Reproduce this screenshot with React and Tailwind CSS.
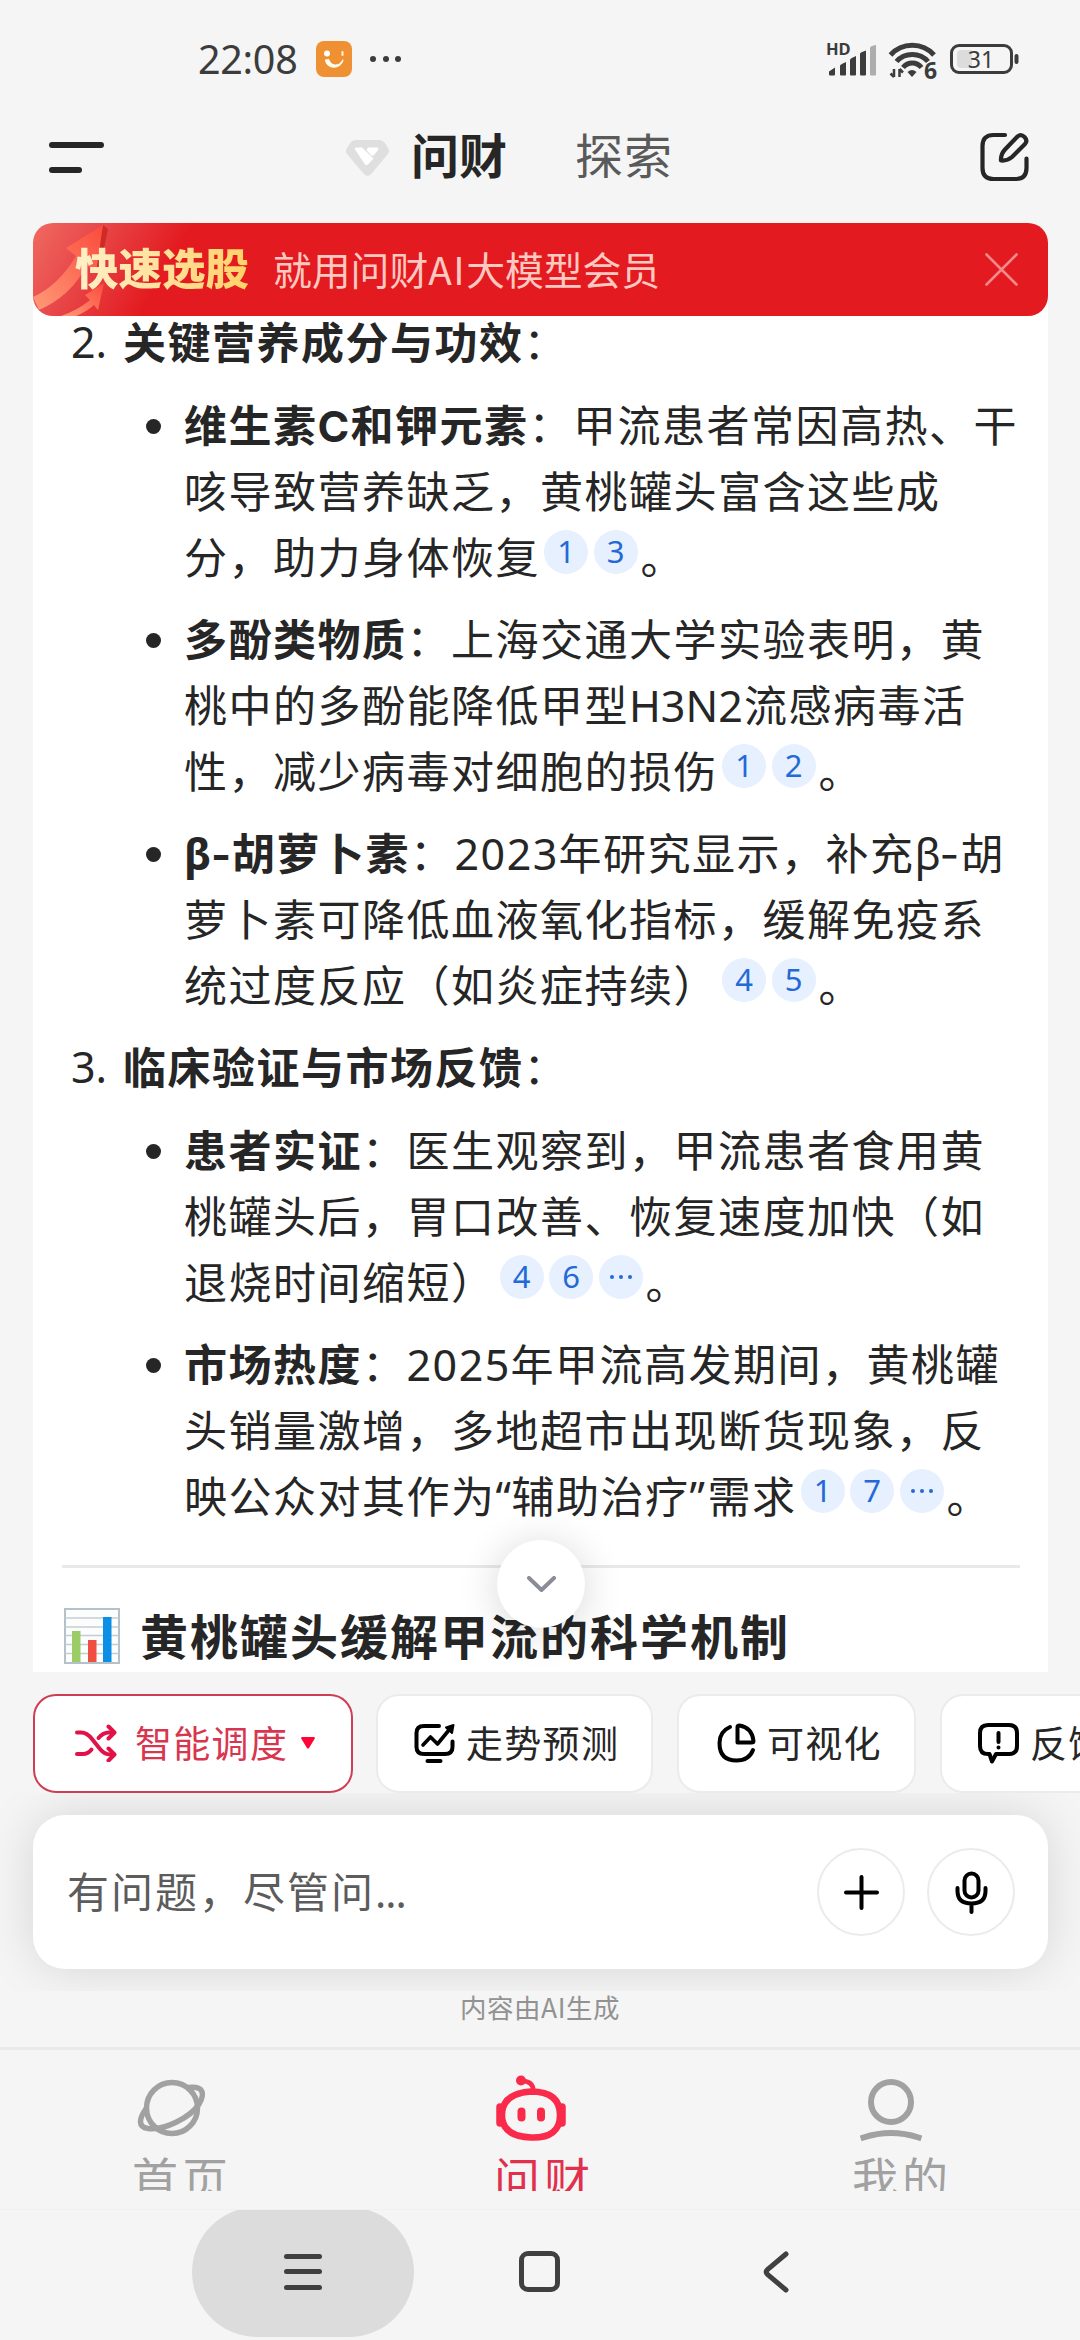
import clsx from "clsx";

const SECTIONS = [
  {
    no: "2.",
    title: "关键营养成分与功效",
    items: [
      {
        lines: [
          [{ b: "维生素" }, { b: "C", w: "w-[33px]", inter: true }, { b: "和钾元素" }, "：甲流患者常因高热、干"],
          ["咳导致营养缺乏，黄桃罐头富含这些成"],
          ["分，助力身体恢复"],
        ],
        refs: ["1", "3"],
      },
      {
        lines: [
          [{ b: "多酚类物质" }, "：上海交通大学实验表明，黄"],
          ["桃中的多酚能降低甲型", { t: "H3N2", w: "w-[115px]" }, "流感病毒活"],
          ["性，减少病毒对细胞的损伤"],
        ],
        refs: ["1", "2"],
      },
      {
        lines: [
          [
            { b: "β", w: "w-[27px]" },
            { b: "-", w: "w-[21px]", inter: true },
            { b: "胡萝卜素" },
            "：",
            { t: "2023", w: "w-[104px] tracking-[1.5px]" },
            "年研究显示，补充",
            { t: "β", w: "w-[25px]" },
            { t: "-", w: "w-[21px]", inter: true },
            "胡",
          ],
          ["萝卜素可降低血液氧化指标，缓解免疫系"],
          ["统过度反应（如炎症持续）"],
        ],
        refs: ["4", "5"],
      },
    ],
  },
  {
    no: "3.",
    title: "临床验证与市场反馈",
    items: [
      {
        lines: [
          [{ b: "患者实证" }, "：医生观察到，甲流患者食用黄"],
          ["桃罐头后，胃口改善、恢复速度加快（如"],
          ["退烧时间缩短）"],
        ],
        refs: ["4", "6", "···"],
      },
      {
        lines: [
          [{ b: "市场热度" }, "：", { t: "2025", w: "w-[104px] tracking-[1.5px]" }, "年甲流高发期间，黄桃罐"],
          ["头销量激增，多地超市出现断货现象，反"],
          ["映公众对其作为", { t: "“", w: "w-[16px]" }, "辅助治疗", { t: "”", w: "w-[18px]" }, "需求"],
        ],
        refs: ["1", "7", "···"],
      },
    ],
  },
];

function Run({ part }) {
  if (typeof part === "string") return part;
  return (
    <span
      className={clsx(
        part.b && "font-bold",
        part.w && "inline-block leading-none",
        part.w && !part.w.includes("tracking") && "tracking-normal",
        part.w && (part.inter ? "font-['Inter',sans-serif]" : "font-['Noto_Sans','Noto_Sans_CJK_SC',sans-serif]"),
        part.w
      )}
    >
      {part.b || part.t}
    </span>
  );
}

function Refs({ list }) {
  return (
    <>
      <span className="ml-[4px] mr-[3px] inline-flex gap-[5.5px] align-[11px]">
        {list.map((r) => (
          <span
            key={r}
            className="flex size-[44px] items-center justify-center rounded-full bg-[#e6f0ff] font-['Noto_Sans',sans-serif] text-[31px] leading-none tracking-normal text-[#2469d6]"
          >
            {r === "···" ? (
              <span className="flex gap-[5px]">
                <i className="size-[4px] rounded-full bg-[#2469d6]" />
                <i className="size-[4px] rounded-full bg-[#2469d6]" />
                <i className="size-[4px] rounded-full bg-[#2469d6]" />
              </span>
            ) : (
              r
            )}
          </span>
        ))}
      </span>
      。
    </>
  );
}

function Section({ section }) {
  return (
    <section>
      <h3 className="mb-[17px] flex h-[66px] pl-[38px]">
        <span className="w-[52px] pt-[2px] font-['Noto_Sans',sans-serif] tracking-normal">{section.no}</span>
        <b className="font-bold">{section.title}</b>：
      </h3>
      <ul>
        {section.items.map((item, i) => (
          <li key={i} className="mb-[16px] flex pl-[113px]">
            <span className="mr-[23px] mt-[29px] size-[15px] shrink-0 rounded-full bg-[#262626]" />
            <div>
              {item.lines.map((line, n) => (
                <div key={n} className="h-[66px] whitespace-nowrap">
                  {line.map((part, k) => (
                    <Run key={k} part={part} />
                  ))}
                  {n === item.lines.length - 1 && <Refs list={item.refs} />}
                </div>
              ))}
            </div>
          </li>
        ))}
      </ul>
    </section>
  );
}

function StatusBar() {
  return (
    <div className="flex h-[118px] items-center pl-[198px] pr-[60px] text-[#3c3c3c]">
      <span className="w-[102px] font-['Noto_Sans',sans-serif] text-[39.5px] leading-[50px] tracking-[-0.3px]">22:08</span>
      <svg className="ml-[16px] size-[36px]" viewBox="0 0 36 36">
        <rect width="36" height="36" rx="8" fill="#ef9133" />
        <circle cx="11" cy="12.5" r="3" fill="#fff" />
        <rect x="25.5" y="10" width="2" height="5" rx="1" fill="#fff6e0" />
        <path d="M9.5 19c1 9.500 15.500 9.500 17.500 0-4 7-11.500 7-14.500-.5z" fill="#fffdf0" stroke="#fffdf0" strokeWidth="1.2" strokeLinejoin="round" />
      </svg>
      <span className="ml-[18px] flex gap-[6.500px]">
        <i className="size-[6px] rounded-full bg-[#3c3c3c]" />
        <i className="size-[6px] rounded-full bg-[#3c3c3c]" />
        <i className="size-[6px] rounded-full bg-[#3c3c3c]" />
      </span>

      <div className="ml-auto flex items-center">
        <svg className="h-[44px] w-[52px] overflow-visible" viewBox="0 -4 52 44" fill="#3c3c3c">
          <text x="0" y="14" fontFamily="Noto Sans" fontSize="16.500" fontWeight="700">HD</text>
          <path d="M3 30.500l6-4v7q0 1-1 1H4q-1 0-1-1z" />
          <path d="M14 24.500q0-1 6-3.500v12.500q0 1-1 1h-4q-1 0-1-1z" />
          <path d="M24 18.500q0-1 6-3.500v18.500q0 1-1 1h-4q-1 0-1-1z" />
          <path d="M34 12.500q0-1 6-3v24q0 1-1 1h-4q-1 0-1-1z" />
          <path d="M44 7q0-2 6-3v29.500q0 1-1 1h-4q-1 0-1-1z" fill="#adadad" />
        </svg>
        <svg className="ml-[11px] h-[48px] w-[51px] overflow-visible" viewBox="0 -4 51 48" fill="none" stroke="#3c3c3c" strokeWidth="5">
          <path d="M1.500 16C13 3 33.500 3 45 16" />
          <path d="M7.500 22.500C15.500 13 31 13 39 22.500" />
          <path d="M14 28.500C19 22.500 27.500 22.500 32.500 28.500" />
          <path d="M18.500 33q4.500-4 9 0l-4.500 5z" fill="#3c3c3c" stroke="none" />
          <path d="M5 30v8M5 38l-3.500-3.500M10.500 38v-8M10.500 30l3.500 3.500" strokeWidth="2.500" />
          <text x="35" y="39.500" fill="#3c3c3c" stroke="#f5f5f5" strokeWidth="2" paintOrder="stroke" fontFamily="Noto Sans" fontSize="23" fontWeight="700">6</text>
        </svg>
        <svg className="ml-[10px] h-[30px] w-[70px]" viewBox="0 0 70 30">
          <rect x="1.500" y="1.500" width="60" height="27" rx="7.500" fill="none" stroke="#3c3c3c" strokeWidth="3" />
          <path d="M11 6h11v18H11q-4 0-4-4V10q0-4 4-4z" fill="#dcdcdc" />
          <rect x="64.500" y="10" width="4" height="10" rx="2" fill="#3c3c3c" />
          <text x="31" y="23.500" textAnchor="middle" fill="#3c3c3c" fontFamily="Noto Sans" fontSize="23">31</text>
        </svg>
      </div>
    </div>
  );
}

function Header() {
  return (
    <header className="flex h-[78px] items-center pl-[49px] pr-[50px] text-[48px] leading-none">
      <div className="flex flex-col gap-[19px]">
        <i className="h-[6px] w-[55px] rounded-full bg-[#262626]" />
        <i className="h-[6px] w-[33px] rounded-full bg-[#262626]" />
      </div>
      <svg className="ml-[242px] mt-[2px] h-[36px] w-[43px]" viewBox="0 0 43 36">
        <path d="M9.500 0h24q3 0 5 2.500l3.500 5.500q2 3 0 6L26 33q-4.500 6-9 0L1 14q-2-3 0-6L4.500 2.500Q6.500 0 9.500 0z" fill="#dfdfdf" />
        <path d="M10 7.500h6l11.500 11-5.500 6q-1.500 1-3 0L9 9.500q-1-2 1-2zM22 7.500h9q2 0 1 2.500l-4 5q-1.500 1.500-3 0l-4.500-5z" fill="#fff" />
      </svg>
      <span className="ml-[22px] pb-[8px] font-bold text-[#262626]">问财</span>
      <span className="ml-[68px] pb-[8px] tracking-[1px] text-[#5a5a5a]">探索</span>
      <svg className="ml-auto size-[50px]" viewBox="0 0 50 50" fill="none" stroke="#262626" strokeWidth="4.200" strokeLinecap="round" strokeLinejoin="round">
        <path d="M25 3H13.500Q2.500 3 2.500 14v22q0 11 11 11h22q11 0 11-11V26.500" />
        <path d="M21 28.500q-.5-6 4-11L37.500 4.500q3.500-3 7 0.500t.5 7L32 25q-4.500 4-11 3.500z" />
      </svg>
    </header>
  );
}

function Banner() {
  return (
    <div className="relative z-10 mx-[33px] mt-[27px] flex h-[93px] w-[1015px] items-center overflow-hidden rounded-[20px] bg-[#e31a1f] bg-[linear-gradient(120deg,#f06a60_0px,#e8484a_60px,#e31a1f_140px)]">
      <svg className="absolute left-0 top-0 h-[93px] w-[100px]" viewBox="0 0 100 93">
        <defs>
          <linearGradient id="arrow" x1="0" y1="1" x2="1" y2="0">
            <stop offset="0" stopColor="#ff9a78" />
            <stop offset="1" stopColor="#fb4a3c" />
          </linearGradient>
        </defs>
        <path d="M70 2l5 4-9 44-5-3z" fill="#cf2b22" />
        <path d="M0 74Q26 62 43 33L33 25 70 2l-7 48-9-8Q38 73 6 87z" fill="url(#arrow)" />
        <path d="M28 93q17-6 29-16l-5-5 19-12-6 27-4-5q-8 7-18 11z" fill="url(#arrow)" />
      </svg>
      <span className="relative -mt-[5px] ml-[42px] bg-gradient-to-r from-[#fff0c8] to-[#ffd166] bg-clip-text text-[43.500px] font-black leading-[60px] text-transparent">快速选股</span>
      <span className="-mt-[3px] ml-[24px] text-[38.800px] leading-none text-[#ffc8c0]">就用问财<span className="tracking-[1.500px]">AI</span>大模型会员</span>
      <svg className="ml-auto mr-[30px] size-[33px]" viewBox="0 0 33 33" stroke="#f4898b" strokeWidth="2.600" strokeLinecap="round">
        <path d="M1.500 1.500l30 30M31.500 1.500l-30 30" />
      </svg>
    </div>
  );
}

function ChartEmoji() {
  return (
    <svg className="mr-[20px] mt-[5px] h-[56px] w-[56px]" viewBox="0 0 56 56">
      <rect x="1" y="1" width="54" height="54" fill="#fcfdfd" stroke="#b4c1c8" strokeWidth="2" />
      <path d="M1 10h54M1 19h54M1 27.500h54M1 36.500h54M1 45.500h54" stroke="#c3ced3" strokeWidth="1.500" />
      <rect x="8" y="23" width="8.500" height="31" fill="#9ccc65" />
      <rect x="24" y="32" width="8.500" height="22" fill="#f04e40" />
      <rect x="39" y="9" width="8.500" height="45" fill="#0a8ee6" />
    </svg>
  );
}

function Answer() {
  return (
    <main className="mx-[33px] -mt-[20px] h-[1376px] w-[1015px] overflow-hidden bg-white">
      <div className="mt-[11px] text-[43px] leading-[66px] tracking-[1.500px] text-[#262626]">
        {SECTIONS.map((s) => (
          <Section key={s.no} section={s} />
        ))}
      </div>
    </main>
  );
}

function Chip({ children, className }) {
  return (
    <div className={clsx("flex h-[99px] shrink-0 items-center rounded-[23px] border-[2px] bg-white pb-[2px]", className)}>
      {children}
    </div>
  );
}

function Chips() {
  return (
    <div className="mt-[22px] flex gap-[24px] overflow-hidden pl-[33px] text-[37px] leading-none tracking-[1.300px] text-[#262626]">
      <Chip className="w-[320px] border-[#cf3d55] pl-[40px] text-[#d8364f]">
        <svg className="mr-[18px] h-[38px] w-[42px]" viewBox="0 0 42 38" fill="none" stroke="#e01248" strokeWidth="4" strokeLinecap="round" strokeLinejoin="round">
          <path d="M2 8.500h4Q12 8.500 17 15l8 10q4.500 5.500 10 5.500h4" />
          <path d="M2 30h6q5 0 8.500-4.500M23.500 14Q28 8.500 34 8.500h5" />
          <path d="M33.500 2.500l6 6-6 6M33.500 24.500l6 6-6 6" />
        </svg>
        智能调度
        <svg className="ml-[13px] h-[12px] w-[14px]" viewBox="0 0 14 12">
          <path d="M1 0h12q1.500.5.500 2L8 11q-1 1.500-2 0L.5 2Q-.5.500 1 0z" fill="#ff0436" />
        </svg>
      </Chip>
      <Chip className="-ml-[1px] w-[277px] border-[#ebebeb] pl-[36px]">
        <svg className="mr-[11px] h-[40px] w-[41px]" viewBox="0 0 41 40" fill="none" stroke="#000" strokeWidth="4" strokeLinecap="round" strokeLinejoin="round">
          <path d="M25 3H10Q2.500 3 2.500 10v14q0 7 7.500 7h21q7.500 0 7.500-7v-5.500" />
          <path d="M9 22l7.500-8 7 7L35 7" strokeWidth="3.600" />
          <path d="M32 4.500l7.500-2.500-1.500 8z" fill="#000" strokeWidth="2" />
          <path d="M13.500 38h13" />
        </svg>
        走势预测
      </Chip>
      <Chip className="w-[239px] border-[#ebebeb] pl-[38px]">
        <svg className="mr-[11px] h-[40px] w-[39px]" viewBox="0 0 39 40" fill="none" stroke="#000" strokeWidth="4" strokeLinecap="round" strokeLinejoin="round">
          <path d="M13 4Q2.500 8.500 2.500 20q0 17.500 17 17.500Q32 37.500 36 27" />
          <path d="M20.500 19.500V4q0-1.500 2-1.500Q35 4.500 36.500 18q0 1.500-2 1.500z" />
        </svg>
        可视化
      </Chip>
      <Chip className="w-[240px] border-[#ebebeb] pl-[36px]">
        <svg className="mr-[11px] h-[42px] w-[41px]" viewBox="0 0 41 42" fill="none" stroke="#000" strokeWidth="4" strokeLinecap="round" strokeLinejoin="round">
          <path d="M10 3h21q8 0 8 8v13q0 8-8 8H18l-4 7.500L11.500 32H10q-8 0-8-8V11q0-8 8-8z" />
          <path d="M20.500 11v9M20.500 25.500v.1" />
        </svg>
        反馈
      </Chip>
    </div>
  );
}

function InputBar() {
  return (
    <div className="h-[198px] overflow-hidden px-[33px] pt-[22px]">
      <div className="flex h-[154px] w-[1015px] items-center rounded-[32px] bg-white pl-[34px] pr-[33px] shadow-[0_0_50px_rgba(0,0,0,0.130)]">
        <span className="pb-[3px] text-[42px] leading-none tracking-[2px] text-[#5c5c5c]">有问题，尽管问<span className="font-['Noto_Sans',sans-serif] tracking-[-1px]">...</span></span>
        <div className="ml-auto flex size-[88px] items-center justify-center rounded-full border-[2.500px] border-[#ebebeb]">
          <svg className="size-[35px]" viewBox="0 0 35 35" stroke="#000" strokeWidth="4" strokeLinecap="round">
            <path d="M17.500 2v31M2 17.500h31" />
          </svg>
        </div>
        <div className="ml-[22px] flex size-[88px] items-center justify-center rounded-full border-[2.500px] border-[#ebebeb]">
          <svg className="h-[43px] w-[33px]" viewBox="0 0 33 43" fill="none" stroke="#000" strokeWidth="4" strokeLinecap="round">
            <rect x="9.500" y="2.500" width="14" height="24" rx="7" />
            <path d="M2.500 17v3q0 12.500 14 12.500t14-12.500v-3M16.500 33v8" />
          </svg>
        </div>
      </div>
    </div>
  );
}

function TabBar() {
  return (
    <nav className="flex h-[160px] border-b border-[#f0f0f0] text-[46px] leading-[55px] tracking-[4px] text-[#a1a1a1]">
      <div className="ml-[132px] w-[362px] pt-[29px]">
        <svg className="ml-[5px] h-[58px] w-[68px]" viewBox="0 0 68 58" fill="none" stroke="#a1a1a1" strokeWidth="5.500">
          <circle cx="35" cy="29" r="25.500" />
          <path d="M51 8.500C66 6.500 68.500 14 62 25 54 38 27 52 11 49.500 1 48 1.500 40 9.500 29" />
        </svg>
        <div className="mt-[12px] h-[42px] overflow-hidden">首页</div>
      </div>
      <div className="w-[358px] pt-[25px] text-[#e0304b]">
        <svg className="ml-[2px] h-[67px] w-[70px]" viewBox="0 0 70 67" fill="none" stroke="#f92a4a" strokeWidth="6.500">
          <path d="M35 16.500q29 0 29 23.500T35 62.500 6 40t29-23.500z" />
          <path d="M4 32v16M66 32v16" strokeLinecap="round" strokeWidth="7.500" />
          <path d="M37.500 16Q37 5.500 25 6" strokeWidth="4.500" />
          <circle cx="25" cy="5.500" r="5" fill="#f92a4a" stroke="none" />
          <path d="M25.500 36.500v6M45 36.500v6" strokeLinecap="round" strokeWidth="8" />
        </svg>
        <div className="mt-[7px] h-[42px] overflow-hidden">问财</div>
      </div>
      <div className="pt-[29px]">
        <svg className="ml-[8px] h-[63px] w-[62px]" viewBox="0 0 62 63" fill="none" stroke="#a1a1a1" strokeWidth="6">
          <circle cx="31" cy="23" r="20" />
          <path d="M3.500 58.500q27.500-9 55 0" strokeLinecap="square" />
        </svg>
        <div className="mt-[7px] h-[42px] overflow-hidden">我的</div>
      </div>
    </nav>
  );
}

function SystemNav() {
  return (
    <div className="flex h-[130px] items-center overflow-hidden pl-[192px]">
      <div className="-mt-[7px] flex h-[130px] w-[222px] shrink-0 items-center justify-center rounded-full bg-[#dcdcdc]">
        <div className="flex flex-col gap-[10.500px]">
          <i className="h-[5px] w-[38px] rounded-sm bg-[#404040]" />
          <i className="h-[5px] w-[38px] rounded-sm bg-[#404040]" />
          <i className="h-[5px] w-[38px] rounded-sm bg-[#404040]" />
        </div>
      </div>
      <div className="-mt-[7px] ml-[105px] size-[41px] rounded-[9px] border-[5px] border-[#404040]" />
      <svg className="-mt-[7px] ml-[203px] h-[42px] w-[26px]" viewBox="0 0 26 42" fill="none" stroke="#404040" strokeWidth="5" strokeLinecap="round">
        <path d="M23 3L4.500 18.500q-2.500 2.500 0 5L23 39" />
      </svg>
    </div>
  );
}

export default function App() {
  return (
    <div className="h-[2340px] w-[1080px] overflow-hidden bg-[#f5f5f5] font-['Noto_Sans_CJK_SC',sans-serif]" lang="zh-CN">
      <StatusBar />
      <Header />
      <Banner />
      <div className="relative">
        <Answer />
        {/* next section title, partly under the scroll button */}
        <div className="absolute bottom-0 left-[62px] w-[958px]">
          <div className="h-[3px] bg-[#e9e9e9]" />
          <div className="flex h-[104px] items-center pb-[8px] pl-[2px] pt-[35px] text-[48px] font-bold leading-none tracking-[2px] text-[#262626]">
            <ChartEmoji />
            黄桃罐头缓解甲流的科学机制
          </div>
        </div>
        <div className="absolute bottom-[44px] left-[497px] flex size-[88px] items-center justify-center rounded-full bg-white shadow-[0_4px_40px_rgba(0,0,0,0.160)]">
          <svg className="h-[17px] w-[29px]" viewBox="0 0 29 17" fill="none" stroke="#8a8d98" strokeWidth="4" strokeLinecap="round" strokeLinejoin="round">
            <path d="M2 2l12.500 12L27 2" />
          </svg>
        </div>
      </div>
      <Chips />
      <InputBar />
      <div className="flex h-[56px] justify-center pt-[1px] text-[26.500px] leading-[30px] tracking-[0.500px] text-[#929292]">内容由AI生成</div>
      <div className="h-[3px] bg-[#eaeaea]" />
      <TabBar />
      <SystemNav />
    </div>
  );
}
